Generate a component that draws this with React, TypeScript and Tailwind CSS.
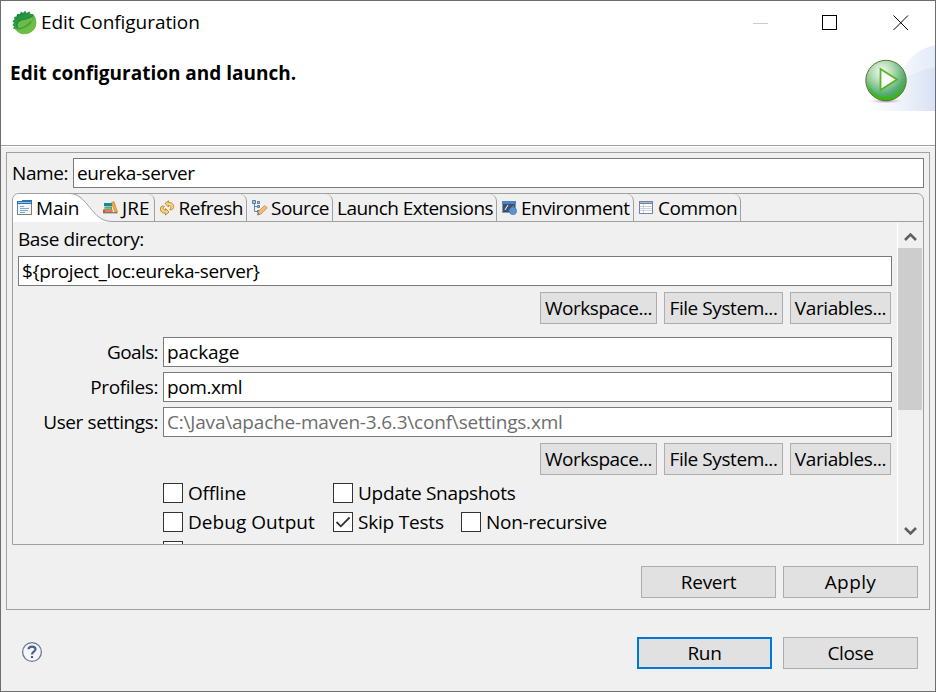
import type { ReactNode } from "react";

const label = "block whitespace-nowrap leading-[24px]";

function Button({ children, size, primary }: { children: ReactNode; size: string; primary?: boolean }) {
  return (
    <button
      className={`flex h-8 shrink-0 items-center justify-center whitespace-nowrap bg-[#e1e1e1] ${size} ${
        primary ? "border-2 border-[#0078d7]" : "border border-[#adadad]"
      }`}
    >
      {children}
    </button>
  );
}

function Field({ value, width, muted }: { value: string; width: string; muted?: boolean }) {
  return (
    <div
      className={`flex h-[30px] shrink-0 items-center whitespace-nowrap border border-[#7a7a7a] bg-white pl-[3px] ${width} ${
        muted ? "text-[#6d6d6d]" : ""
      }`}
    >
      {value}
    </div>
  );
}

function Check({ text, checked, width }: { text: string; checked?: boolean; width: string }) {
  return (
    <div className={`flex h-5 shrink-0 items-center gap-[5px] ${width}`}>
      <span className="flex size-5 shrink-0 items-center justify-center border border-[#333] bg-white">
        {checked && (
          <svg width="18" height="18" viewBox="0 0 18 18" fill="none" stroke="#333" strokeWidth="1.8">
            <path d="M2.5 9 L6.8 13.3 L15.6 4.5" />
          </svg>
        )}
      </span>
      <span className={label}>{text}</span>
    </div>
  );
}

function BrowseButtons() {
  return (
    <div className="flex gap-[7px] pl-[527px]">
      <Button size="w-[117px] tracking-[-0.48px]">Workspace...</Button>
      <Button size="w-[119px] tracking-[-0.43px]">File System...</Button>
      <Button size="w-[101px] tracking-[-0.4px]">Variables...</Button>
    </div>
  );
}

function SpringIcon() {
  return (
    <svg width="25" height="25" viewBox="0 0 25 25">
      <defs>
        <linearGradient id="spring" x1="0" y1="0" x2="0.5" y2="1">
          <stop offset="0" stopColor="#128046" />
          <stop offset="0.5" stopColor="#2f9a40" />
          <stop offset="1" stopColor="#7cc243" />
        </linearGradient>
      </defs>
      <path
        d="M5 4 L8 4 L9 1.500 L11 3 L13 0.800 L14.500 3 L17.500 1.500 L18.500 4 L21 4 C25.500 10 25.500 17 20.500 21 C15 26 7 25 3.500 19.500 L1 18.500 L2 16.500 L0.500 15 L2 13 L0.500 11 L2.500 9.500 L2 7 L4.500 6.500Z"
        fill="url(#spring)"
      />
      <path d="M3.500 19 C13 21 18 18 20 12 C21 9 22 7 21.500 4.500 C25.500 10 25 17 20.500 21 C15 25.500 8 25 3.500 19Z" fill="#70bd44" />
      <path d="M20.500 6 C18 9.500 13 9 9 10.500 C5 12 4.500 16 7 18.500 C12 20 17.500 18 19.500 12.500 C20.500 10 21 8 20.500 6Z" fill="#6bbc46" />
      <path d="M6.500 19 C11.500 18 16 15.500 19 11.500" fill="none" stroke="#2d963c" strokeWidth="1.200" />
      <path d="M20.500 5.500 C18 9 12 8.500 8 10.500 C4 12.500 4 16 6 18.500" fill="none" stroke="#198746" strokeWidth="1.100" />
    </svg>
  );
}

function Banner() {
  return (
    <svg width="74" height="67" viewBox="-1 0 74 67" className="block">
      <defs>
        <linearGradient id="wave" x1="0" x2="1">
          <stop offset="0" stopColor="#fff" />
          <stop offset="0.5" stopColor="#f5f8fd" />
          <stop offset="1" stopColor="#e4eaf8" />
        </linearGradient>
        <linearGradient id="wave2" x1="0" x2="1">
          <stop offset="0" stopColor="#fff" stopOpacity="0.2" />
          <stop offset="1" stopColor="#d8e1f4" />
        </linearGradient>
        <radialGradient id="ball" cx="0.4" cy="0.28" r="0.75">
          <stop offset="0" stopColor="#f7fcf5" />
          <stop offset="0.35" stopColor="#b5dcb4" />
          <stop offset="0.75" stopColor="#55ad70" />
          <stop offset="1" stopColor="#3a9d45" />
        </radialGradient>
        <linearGradient id="rim" x1="0" y1="0" x2="0" y2="1">
          <stop offset="0.5" stopColor="#45b520" stopOpacity="0" />
          <stop offset="1" stopColor="#3bb80c" />
        </linearGradient>
        <radialGradient id="shade">
          <stop offset="0" stopColor="#8d8292" />
          <stop offset="1" stopColor="#fff" stopOpacity="0" />
        </radialGradient>
      </defs>
      <path d="M0 67 C20 58 36 36 40 26 C50 9 62 3 74 1 V67Z" fill="url(#wave)" />
      <path d="M0 67 C24 48 42 28 74 23 V67Z" fill="url(#wave2)" />
      <ellipse cx="24" cy="57" rx="20" ry="3" fill="url(#shade)" />
      <circle cx="24" cy="36.500" r="20.200" fill="url(#ball)" stroke="#617332" />
      <circle cx="24" cy="36.500" r="18" fill="none" stroke="url(#rim)" strokeWidth="3" />
      <path d="M18.500 25 L35 35.500 L18.500 46Z" fill="#fff" stroke="#57b22c" strokeWidth="1.800" />
    </svg>
  );
}

function MainIcon() {
  return (
    <svg width="16" height="16" viewBox="0 0 16 16" className="block">
      <rect x="0.500" y="2.500" width="14" height="12" fill="#f0f7fd" stroke="#857f68" />
      <path d="M0.500 3 V14" stroke="#4e89c0" />
      <path d="M0 1 H5 V0 H15 V4 H0Z" fill="#2b70b3" />
      <path d="M1 2.500 H14" stroke="#8fc5ea" />
      <path d="M3 6.500 H7 M3 8.500 H12 M3 10.500 H11 M3 12.500 H8" stroke="#86a5cb" />
    </svg>
  );
}

function BooksIcon() {
  return (
    <svg width="16" height="16" viewBox="0 0 16 16">
      <path d="M2 3 H10 V6 H2Z" fill="#168b96" />
      <path d="M2.500 6.500 H10 V9.500 H2.500Z" fill="#4d9a64" />
      <path d="M1 9.500 H10.500 V12.500 H1Z" fill="#c8572b" />
      <path d="M3 8.200 H9" stroke="#c7dfb7" strokeWidth="0.700" />
      <path d="M3 11 H10" stroke="#efc5a4" strokeWidth="0.800" />
      <path d="M9.500 2.500 L12 1.500 L15.500 12 L13 12.500Z" fill="#f4ab38" stroke="#cb7b22" strokeWidth="0.600" />
      <path d="M1 12.800 H15.500" stroke="#70594f" />
    </svg>
  );
}

function RefreshIcon() {
  return (
    <svg width="16" height="16" viewBox="0 0 16 16" fill="#f8d583" stroke="#bd7d25" strokeWidth="0.900" strokeLinejoin="round">
      <path d="M6 3.500 L9.500 0.800 V2.500 C13 2 15 4.500 14.500 7.500 C14 9.500 12 10.500 10.500 9.500 C12.500 8.500 12.500 5.500 9.500 5.500 V7Z" />
      <path d="M10 12 L6.500 15 V13.200 C3 13.500 1 11 1.500 8 C2 6 4 5.500 5.500 6.500 C3.500 7.500 3.800 10.200 6.500 10.200 V8.500Z" />
    </svg>
  );
}

function SourceIcon() {
  return (
    <svg width="16" height="16" viewBox="0 0 16 16">
      <path d="M2.500 3 V11.500 H6 M3 6.500 H6" fill="none" stroke="#6785aa" />
      <path d="M0.500 0.500 H3.500 V3.500 H0.500Z M5.500 1.500 H7.500 V3.500 H5.500Z M5.500 5.500 H7.500 V7.500 H5.500Z M5.500 10.500 H7.500 V12.500 H5.500Z" fill="#a8c3e3" stroke="#49709f" strokeWidth="0.900" />
      <path d="M6.500 11.500 L12.500 5.500 L15.300 7.800 L9 14 L5.500 15Z" fill="#f0bd7d" stroke="#c28a4a" strokeWidth="0.800" />
      <path d="M5.300 15.300 L6 12.800 L8 14.500Z" fill="#777" />
    </svg>
  );
}

function EnvironmentIcon() {
  return (
    <svg width="16" height="16" viewBox="0 0 16 16">
      <rect x="0.500" y="1.500" width="13" height="11" fill="#3d4f73" stroke="#8d95a5" />
      <path d="M0 1 H14 V4 H0Z" fill="#4586c3" />
      <path d="M3 10 L6 5" stroke="#fff" />
      <path d="M6 11 L12 5 V10Z" fill="#6f89a9" />
      <circle cx="11" cy="11" r="3.700" fill="#5b93cd" stroke="#3e75af" strokeWidth="0.500" />
    </svg>
  );
}

function CommonIcon() {
  return (
    <svg width="14" height="14" viewBox="0 0 14 14">
      <rect x="0.500" y="0.500" width="13" height="12" fill="#fff" stroke="#7484a4" />
      <path d="M0 0 H14 V3 H0Z" fill="#7182a6" />
      <path d="M1 1.500 H13" stroke="#aab7d0" />
      <path d="M4.500 3 V12 M1 5.500 H13 M1 7.500 H13 M1 9.500 H13" stroke="#cbd2df" />
    </svg>
  );
}

function Tab({ icon, text, width, pad }: { icon?: ReactNode; text: string; width: string; pad: string }) {
  return (
    <div className={`flex h-[28px] shrink-0 items-center rounded-tr-[7px] border-r border-[#a0a0a0] ${width} ${pad}`}>
      {icon}
      <span className={label}>{text}</span>
    </div>
  );
}

export default function App() {
  return (
    <div className="flex h-[692px] w-[936px] flex-col overflow-hidden border border-[#6d6d6d] bg-[#f0f0f0] font-['Open_Sans','Noto_Sans',sans-serif] text-[19px] tracking-[-0.4px] text-black">
      <header className="flex h-[145px] shrink-0 flex-col border-b border-[#a0a0a0] bg-white shadow-[0_1px_0_#fff]">
        <div className="flex h-[43px] items-center pl-[11px]">
          <SpringIcon />
          <span className="mb-[2px] ml-[4px] w-[711px] whitespace-nowrap leading-[24px] tracking-[-0.06px]">Edit Configuration</span>
          <svg width="158" height="18" viewBox="0 0 158 18" fill="none" shapeRendering="crispEdges">
            <path d="M1 9.500 H16" stroke="#ccc" />
            <rect x="70.500" y="1.500" width="14" height="14" stroke="#000" />
            <path d="M141.500 1.500 L156 16 M156 1.500 L141.500 16" stroke="#000" shapeRendering="auto" />
          </svg>
        </div>
        <div className="flex justify-between pl-[9px]">
          <h1 className="mt-[17px] text-[19px] font-bold leading-[24px] tracking-normal">Edit configuration and launch.</h1>
          <Banner />
        </div>
      </header>

      <main className="ml-[5px] mt-[6px] flex h-[458px] w-[924px] shrink-0 flex-col border border-[#a0a0a0] pl-[5px] pt-[5px]">
        <div className="flex h-[30px] items-center">
          <span className="w-[61px] whitespace-nowrap">Name:</span>
          <Field value="eureka-server" width="w-[851px]" />
        </div>

        <section className="mt-[5px] flex h-[352px] w-[912px] flex-col overflow-hidden rounded-t-[7px] border border-[#a0a0a0]">
          <nav className="flex h-[28px] shrink-0">
            <div className="relative flex h-[28px] w-[89px] shrink-0 items-center gap-[3px] pl-[4px]">
              <svg className="absolute left-0 top-0" width="911" height="28" viewBox="0 0 911 28" fill="none">
                <path d="M0 0 H57 C75 1 78 27 99 27.500 V28 H0Z" fill="#fff" />
                <path d="M57 -0.500 C75 0 78 27.500 99 27.500 H911" stroke="#a0a0a0" />
              </svg>
              <span className="relative"><MainIcon /></span>
              <span className="relative whitespace-nowrap leading-[24px] tracking-[-0.2px]">Main</span>
            </div>
            <Tab icon={<BooksIcon />} text="JRE" width="w-[53px]" pad="gap-[4px] tracking-[0.1px]" />
            <Tab icon={<RefreshIcon />} text="Refresh" width="w-[92px]" pad="gap-[3.5px] pl-[4px] tracking-[-0.5px]" />
            <Tab icon={<SourceIcon />} text="Source" width="w-[86px]" pad="gap-[3px] pl-[5px] tracking-[-0.5px]" />
            <Tab text="Launch Extensions" width="w-[164px]" pad="pl-[4px] tracking-[-0.53px]" />
            <Tab icon={<EnvironmentIcon />} text="Environment" width="w-[137px]" pad="gap-[3px] pl-[5px] tracking-[-0.5px]" />
            <Tab icon={<CommonIcon />} text="Common" width="w-[107px]" pad="gap-[5px] pl-[5px]" />
          </nav>

          <div className="flex h-[322px] shrink-0">
            <div className="flex w-[884px] shrink-0 flex-col overflow-hidden">
              <span className="ml-[5px] mt-[5px] whitespace-nowrap leading-[24px]">Base directory:</span>
              <div className="ml-[5px] mt-[5px]">
                <Field value="${project_loc:eureka-server}" width="w-[874px]" />
              </div>
              <div className="mt-[6px]"><BrowseButtons /></div>
              <div className="mt-[13px] flex flex-col gap-[5px]">
                <div className="flex items-center gap-[5px]">
                  <span className="w-[145px] text-right tracking-[-0.6px]">Goals:</span>
                  <Field value="package" width="w-[729px] tracking-[-0.05px]" />
                </div>
                <div className="flex items-center gap-[5px]">
                  <span className="w-[145px] text-right">Profiles:</span>
                  <Field value="pom.xml" width="w-[729px]" />
                </div>
                <div className="flex items-center gap-[5px]">
                  <span className="w-[145px] text-right">User settings:</span>
                  <Field value="C:\Java\apache-maven-3.6.3\conf\settings.xml" width="w-[729px] tracking-[-0.2px]" muted />
                </div>
              </div>
              <div className="mt-[6px]"><BrowseButtons /></div>
              <div className="ml-[150px] mt-[8px] flex shrink-0">
                <Check text="Offline" width="w-[170px] tracking-[-0.2px]" />
                <Check text="Update Snapshots" width="w-[200px] tracking-[-0.3px]" />
              </div>
              <div className="ml-[150px] mt-[9px] flex shrink-0">
                <Check text="Debug Output" width="w-[170px] tracking-[0.05px]" />
                <Check text="Skip Tests" width="w-[128px] tracking-[-0.2px]" checked />
                <Check text="Non-recursive" width="w-[160px] tracking-[-0.27px]" />
              </div>
              <div className="ml-[150px] mt-[9px] size-5 shrink-0 border border-[#333] bg-white" />
            </div>
            <div className="flex w-[25px] shrink-0 flex-col border-l border-white">
              <svg width="24" height="26" viewBox="0 0 24 26" fill="none" stroke="#606060" strokeWidth="2.600">
                <path d="M7 18 L12.500 12.500 L18 18" />
              </svg>
              <div className="h-[162px] bg-[#cdcdcd]" />
              <svg className="mt-auto" width="24" height="26" viewBox="0 0 24 26" fill="none" stroke="#606060" strokeWidth="2.600">
                <path d="M7 10 L12.500 15.500 L18 10" />
              </svg>
            </div>
          </div>
        </section>

        <div className="ml-[629px] mt-[21px] flex gap-[7px]">
          <Button size="w-[135px] tracking-[-0.3px]">Revert</Button>
          <Button size="w-[135px] tracking-[0.4px]">Apply</Button>
        </div>
      </main>

      <footer className="mt-[27px] flex h-8 items-center pl-[20px]">
        <svg className="mb-[2px]" width="22" height="22" viewBox="0 0 22 22" fill="none">
          <circle cx="11" cy="11" r="9.400" stroke="#6b7896" strokeWidth="1.300" fill="#f4f5f7" />
          <path d="M7.500 8.300 C7.600 4.600 14.500 4.600 14.500 8.300 C14.500 10.600 11 10.700 11 13.500 M11 15 V17" stroke="#4d5f8c" strokeWidth="2.200" />
        </svg>
        <div className="ml-[594px] flex gap-[11px]">
          <Button size="w-[135px] tracking-[-0.3px]" primary>Run</Button>
          <Button size="w-[135px]">Close</Button>
        </div>
      </footer>
    </div>
  );
}
